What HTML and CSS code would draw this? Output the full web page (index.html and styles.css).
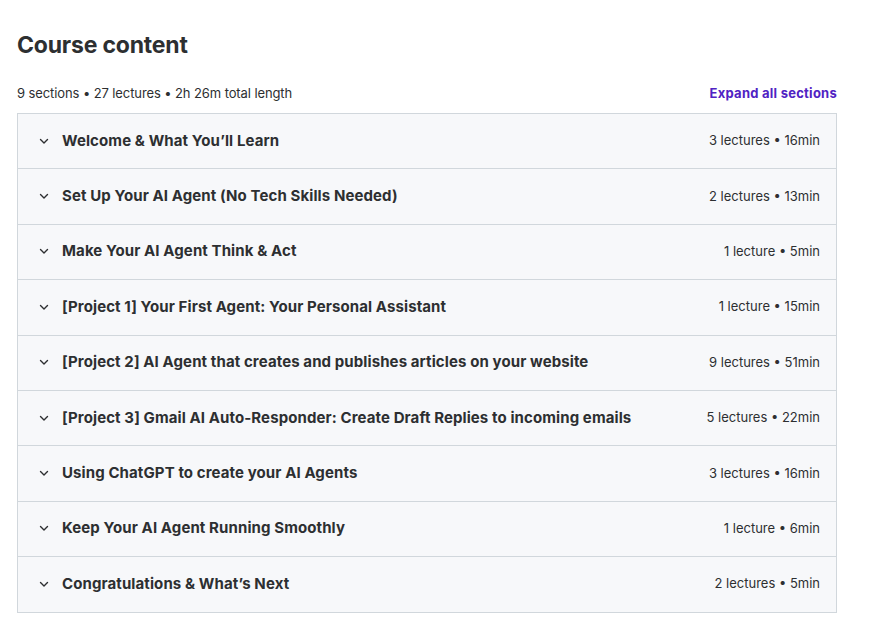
FILE: index.html
```html
<!DOCTYPE html>
<html lang="en">
<head>
  <meta charset="UTF-8" />
  <meta name="viewport" content="width=device-width, initial-scale=1.0" />
  <title>Course content</title>
  <link rel="stylesheet" href="styles.css">
</head>
<body>
  <div class="curriculum">
    <h2>Course content</h2>
    <div class="summary">
      <span>9 sections • 27 lectures • 2h 26m total length</span>
      <button class="expand">Expand all sections</button>
    </div>
    <div class="sections" id="sections"></div>
  </div>
  <script>
    const sections = [
      { title: "Welcome & What You’ll Learn", meta: "3 lectures • 16min" },
      { title: "Set Up Your AI Agent (No Tech Skills Needed)", meta: "2 lectures • 13min" },
      { title: "Make Your AI Agent Think & Act", meta: "1 lecture • 5min" },
      { title: "[Project 1] Your First Agent: Your Personal Assistant", meta: "1 lecture • 15min" },
      { title: "[Project 2] AI Agent that creates and publishes articles on your website", meta: "9 lectures • 51min" },
      { title: "[Project 3] Gmail AI Auto-Responder: Create Draft Replies to incoming emails", meta: "5 lectures • 22min" },
      { title: "Using ChatGPT to create your AI Agents", meta: "3 lectures • 16min" },
      { title: "Keep Your AI Agent Running Smoothly", meta: "1 lecture • 6min" },
      { title: "Congratulations & What’s Next", meta: "2 lectures • 5min" },
    ];

    const list = document.getElementById("sections");
    sections.forEach(s => {
      const row = document.createElement("div");
      row.className = "section";
      row.innerHTML = `
        <svg class="chevron" viewBox="0 0 12 12" width="12" height="12">
          <path d="M2.5 4.5 L6 8 L9.5 4.5" fill="none" stroke="currentColor" stroke-width="1.4" stroke-linecap="round" stroke-linejoin="round"/>
        </svg>
        <span class="title">${s.title}</span>
        <span class="meta">${s.meta}</span>
      `;
      list.appendChild(row);
    });
  </script>
</body>
</html>
```

FILE: styles.css
```css
* {
  box-sizing: border-box;
  margin: 0;
  padding: 0;
}
body {
  background: #fff;
  color: #2d2f31;
  font-family: Inter, "Noto Sans", sans-serif;
}
.curriculum {
  width: 820px;
  margin-left: 17px;
  padding-top: 31px;
}
h2 {
  font-size: 23px;
  font-weight: 700;
  letter-spacing: -0.2px;
  line-height: 28px;
}
.summary {
  display: flex;
  justify-content: space-between;
  align-items: center;
  margin-top: 24px;
  height: 20px;
  font-size: 13px;
  letter-spacing: -0.1px;
}
.expand {
  border: none;
  background: none;
  color: #5022c3;
  font-family: inherit;
  font-size: 13px;
  font-weight: 700;
  letter-spacing: 0.25px;
  cursor: pointer;
}
.sections {
  margin-top: 10px;
  border: 1px solid #d1d7dc;
  border-bottom: none;
}
.section {
  display: flex;
  align-items: center;
  height: 55.4px;
  padding: 0 16px 0 20px;
  background: #f7f8fa;
  border-bottom: 1px solid #d1d7dc;
}
.chevron {
  color: #2d2f31;
  flex: none;
  margin-right: 12px;
  margin-top: -1px;
}
.title {
  flex: 1;
  font-size: 15px;
  font-weight: 700;
  letter-spacing: 0.1px;
  margin-top: -2px;
}
.meta {
  font-size: 13px;
  margin-top: -2px;
}
```
